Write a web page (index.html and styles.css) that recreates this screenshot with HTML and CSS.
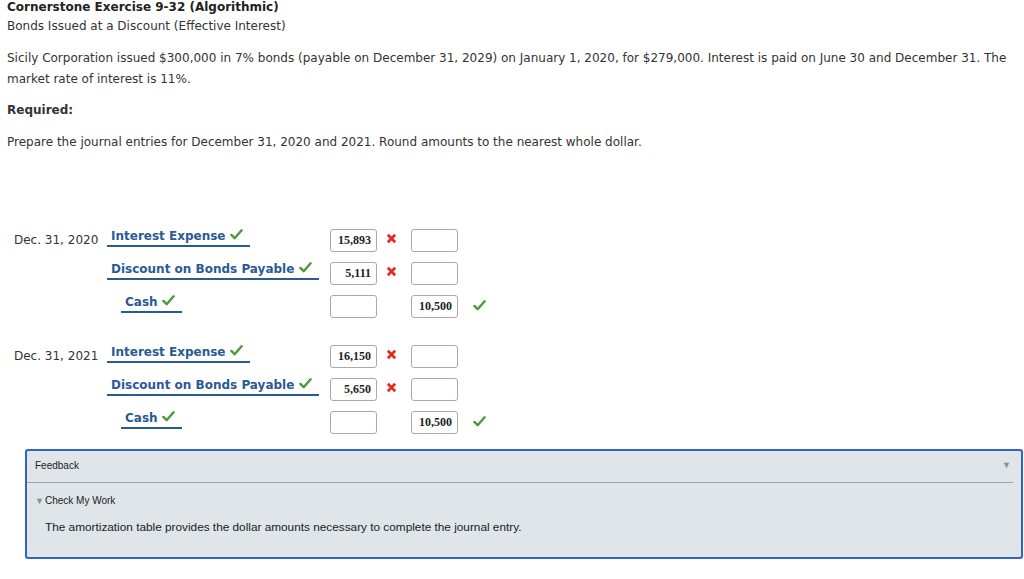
FILE: index.html
```html
<!DOCTYPE html>
<html>
<head>
<meta charset="utf-8">
<link rel="stylesheet" href="styles.css">
</head>
<body>
<div class="page">
  <h1 class="title">Cornerstone Exercise 9-32 (Algorithmic)</h1>
  <div class="subtitle">Bonds Issued at a Discount (Effective Interest)</div>
  <p class="para">Sicily Corporation issued $300,000 in 7% bonds (payable on December 31, 2029) on January 1, 2020, for $279,000. Interest is paid on June 30 and December 31. The market rate of interest is 11%.</p>
  <div class="required">Required:</div>
  <p class="prepare">Prepare the journal entries for December 31, 2020 and 2021. Round amounts to the nearest whole dollar.</p>

  <div class="journal">
    <div class="entry">
      <div class="row">
        <div class="date">Dec. 31, 2020</div>
        <div class="acct-cell"><span class="acct">Interest Expense <svg class="chk" viewBox="0 0 14 14"><path d="M1.5 7.5 L5 11 L12.5 2.5" /></svg></span></div>
        <div class="amt">15,893</div>
        <div class="mark"><svg class="x" viewBox="0 0 12 12"><path d="M2 2 L10 10 M10 2 L2 10"/></svg></div>
        <div class="amt"></div>
        <div class="mark"></div>
      </div>
      <div class="row">
        <div class="date"></div>
        <div class="acct-cell"><span class="acct">Discount on Bonds Payable <svg class="chk" viewBox="0 0 14 14"><path d="M1.5 7.5 L5 11 L12.5 2.5" /></svg></span></div>
        <div class="amt">5,111</div>
        <div class="mark"><svg class="x" viewBox="0 0 12 12"><path d="M2 2 L10 10 M10 2 L2 10"/></svg></div>
        <div class="amt"></div>
        <div class="mark"></div>
      </div>
      <div class="row">
        <div class="date"></div>
        <div class="acct-cell credit"><span class="acct">Cash <svg class="chk" viewBox="0 0 14 14"><path d="M1.5 7.5 L5 11 L12.5 2.5" /></svg></span></div>
        <div class="amt"></div>
        <div class="mark"></div>
        <div class="amt">10,500</div>
        <div class="mark"><svg class="chk big" viewBox="0 0 14 14"><path d="M1.5 7.5 L5 11 L12.5 2.5" /></svg></div>
      </div>
    </div>

    <div class="entry">
      <div class="row">
        <div class="date">Dec. 31, 2021</div>
        <div class="acct-cell"><span class="acct">Interest Expense <svg class="chk" viewBox="0 0 14 14"><path d="M1.5 7.5 L5 11 L12.5 2.5" /></svg></span></div>
        <div class="amt">16,150</div>
        <div class="mark"><svg class="x" viewBox="0 0 12 12"><path d="M2 2 L10 10 M10 2 L2 10"/></svg></div>
        <div class="amt"></div>
        <div class="mark"></div>
      </div>
      <div class="row">
        <div class="date"></div>
        <div class="acct-cell"><span class="acct">Discount on Bonds Payable <svg class="chk" viewBox="0 0 14 14"><path d="M1.5 7.5 L5 11 L12.5 2.5" /></svg></span></div>
        <div class="amt">5,650</div>
        <div class="mark"><svg class="x" viewBox="0 0 12 12"><path d="M2 2 L10 10 M10 2 L2 10"/></svg></div>
        <div class="amt"></div>
        <div class="mark"></div>
      </div>
      <div class="row">
        <div class="date"></div>
        <div class="acct-cell credit"><span class="acct">Cash <svg class="chk" viewBox="0 0 14 14"><path d="M1.5 7.5 L5 11 L12.5 2.5" /></svg></span></div>
        <div class="amt"></div>
        <div class="mark"></div>
        <div class="amt">10,500</div>
        <div class="mark"><svg class="chk big" viewBox="0 0 14 14"><path d="M1.5 7.5 L5 11 L12.5 2.5" /></svg></div>
      </div>
    </div>
  </div>

  <div class="feedback">
    <div class="fb-head">
      <span>Feedback</span>
      <span class="fb-tri">&#9660;</span>
    </div>
    <div class="fb-rule"></div>
    <div class="fb-check"><span class="small-tri">&#9660;</span>Check My Work</div>
    <div class="fb-text">The amortization table provides the dollar amounts necessary to complete the journal entry.</div>
  </div>
</div>
</body>
</html>
```

FILE: styles.css
```css
html, body {
  margin: 0;
  padding: 0;
  background: #ffffff;
}
.page {
  font-family: "DejaVu Sans", Verdana, sans-serif;
  font-size: 12px;
  color: #333333;
  padding: 0 0 0 7px;
}
.title {
  font-size: 12px;
  font-weight: bold;
  color: #222222;
  margin: 0;
  line-height: 14px;
}
.subtitle {
  margin-top: 4px;
  line-height: 16px;
}
.para {
  margin: 14px 10px 0 0;
  line-height: 21px;
}
.required {
  font-weight: bold;
  margin-top: 10px;
  line-height: 21px;
}
.prepare {
  margin: 11px 0 0 0;
  line-height: 21px;
}
.journal {
  margin-top: 73px;
  padding-left: 7px;
  display: flex;
  flex-direction: column;
  gap: 17px;
}
.entry {
  display: flex;
  flex-direction: column;
}
.row {
  display: grid;
  grid-template-columns: 93px 223px 47px 34px 47px 30px;
  height: 33px;
  align-items: start;
}
.date {
  padding-top: 6px;
  line-height: 17px;
}
.acct-cell {
  padding-top: 2px;
}
.acct-cell.credit {
  padding-left: 14px;
}
.acct {
  display: inline-block;
  font-weight: bold;
  color: #2a5a95;
  line-height: 17px;
  padding: 0 7px 0 4px;
  border-bottom: 2px solid #2a5a95;
  white-space: nowrap;
}
.chk {
  width: 13px;
  height: 13px;
  vertical-align: -1px;
  fill: none;
  stroke: #4c9a3c;
  stroke-width: 2.6;
  stroke-linecap: round;
  stroke-linejoin: round;
}
.amt {
  margin-top: 3px;
  height: 23px;
  box-sizing: border-box;
  border: 1px solid #a9a9a9;
  border-radius: 3px;
  background: #ffffff;
  font-family: "Liberation Serif", "Times New Roman", serif;
  font-weight: bold;
  font-size: 12px;
  color: #222222;
  text-align: right;
  padding-right: 5px;
  line-height: 21px;
}
.mark {
  padding-top: 7px;
  padding-left: 9px;
}
.x {
  width: 11px;
  height: 11px;
  display: block;
  fill: none;
  stroke: #e52a24;
  stroke-width: 3;
  stroke-linecap: butt;
}
.chk.big {
  display: block;
  margin-left: 6px;
  margin-top: 0;
}
.feedback {
  margin: 8px 1px 0 18px;
  height: 110px;
  box-sizing: border-box;
  border: 2px solid #2f63c0;
  border-radius: 3px;
  background: #dfe5e8;
  font-family: "Liberation Sans", Arial, sans-serif;
  color: #222222;
}
.fb-head {
  display: flex;
  justify-content: space-between;
  padding: 8px 10px 0 8px;
  font-size: 10px;
  line-height: 14px;
}
.fb-tri {
  color: #8a8f94;
  font-size: 9px;
  line-height: 12px;
}
.fb-rule {
  margin: 9px 8px 0 0;
  height: 1px;
  background: #9ea3a7;
}
.fb-check {
  margin-top: 11px;
  padding-left: 8px;
  font-size: 10px;
  line-height: 14px;
}
.small-tri {
  color: #8a8f94;
  font-size: 9px;
  margin-right: 1px;
}
.fb-text {
  margin-top: 11px;
  padding-left: 18px;
  font-size: 11.8px;
  line-height: 16px;
}
```
